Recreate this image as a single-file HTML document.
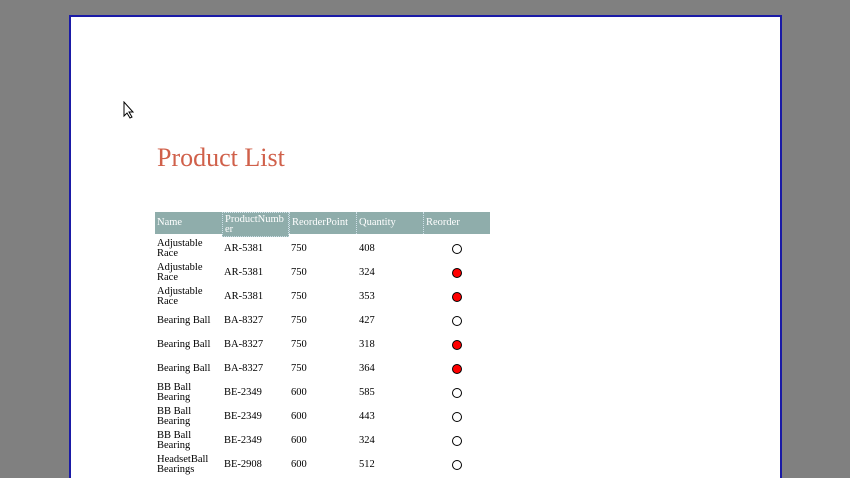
<!DOCTYPE html>
<html><head><style>
html,body{margin:0;width:850px;height:478px;overflow:hidden}
body{background:#808080;position:relative;font-family:"Liberation Serif",serif}
.page{position:absolute;left:69px;top:15px;width:709px;height:470px;background:#fff;border:2px solid #1a1aa6;border-bottom:none}
.t{position:absolute;font-size:10.5px;color:#000;line-height:10px}
.h{position:absolute;top:212px;height:22px;background:#8fadab;color:#fff;font-size:10.5px;line-height:10px;box-sizing:border-box;padding:2px 2px}
.c{position:absolute;left:452px;width:8px;height:8px;border-radius:50%;border:1px solid #000;background:#fff}
.r{background:#f00}
</style></head><body>
<div class="page"></div>
<svg style="position:absolute;left:123px;top:101px" width="12" height="18" viewBox="0 0 12 18"><path d="M1 1 L1 15 L4 12 L7 17 L9 16 L6 11 L10 11 Z" fill="#fff" stroke="#000" stroke-width="1"/></svg>
<div style="position:absolute;left:157px;top:143px;font-size:26px;color:#d0604a;font-family:'Liberation Serif',serif">Product List</div>
<div class="h" style="left:155px;width:67px;padding-top:6px">Name</div>
<div class="h" style="left:222px;width:67px;height:25px;border:1px dotted #cfe0e8">ProductNumb<br>er</div>
<div class="h" style="left:289px;width:67px;padding-top:6px;border-left:1px dotted #cfe0e8">ReorderPoint</div>
<div class="h" style="left:356px;width:67px;padding-top:6px;border-left:1px dotted #cfe0e8">Quantity</div>
<div class="h" style="left:423px;width:67px;padding-top:6px;border-left:1px dotted #cfe0e8">Reorder</div>
<div id="rows"></div>
<script>
var d=[["Adjustable<br>Race","AR-5381","750","408",0],["Adjustable<br>Race","AR-5381","750","324",1],["Adjustable<br>Race","AR-5381","750","353",1],["Bearing Ball","BA-8327","750","427",0],["Bearing Ball","BA-8327","750","318",1],["Bearing Ball","BA-8327","750","364",1],["BB Ball<br>Bearing","BE-2349","600","585",0],["BB Ball<br>Bearing","BE-2349","600","443",0],["BB Ball<br>Bearing","BE-2349","600","324",0],["HeadsetBall<br>Bearings","BE-2908","600","512",0]];
var h="";d.forEach(function(r,i){var y=248+24*i;var two=r[0].indexOf("<br>")>0;
h+='<div class="t" style="left:157px;top:'+(two?y-9:y-4)+'px">'+r[0]+'</div>';
h+='<div class="t" style="left:224px;top:'+(y-4)+'px">'+r[1]+'</div>';
h+='<div class="t" style="left:291px;top:'+(y-4)+'px">'+r[2]+'</div>';
h+='<div class="t" style="left:359px;top:'+(y-4)+'px">'+r[3]+'</div>';
h+='<div class="c'+(r[4]?' r':'')+'" style="top:'+(y-4)+'px"></div>';});
document.getElementById("rows").innerHTML=h;
</script>
</body></html>
